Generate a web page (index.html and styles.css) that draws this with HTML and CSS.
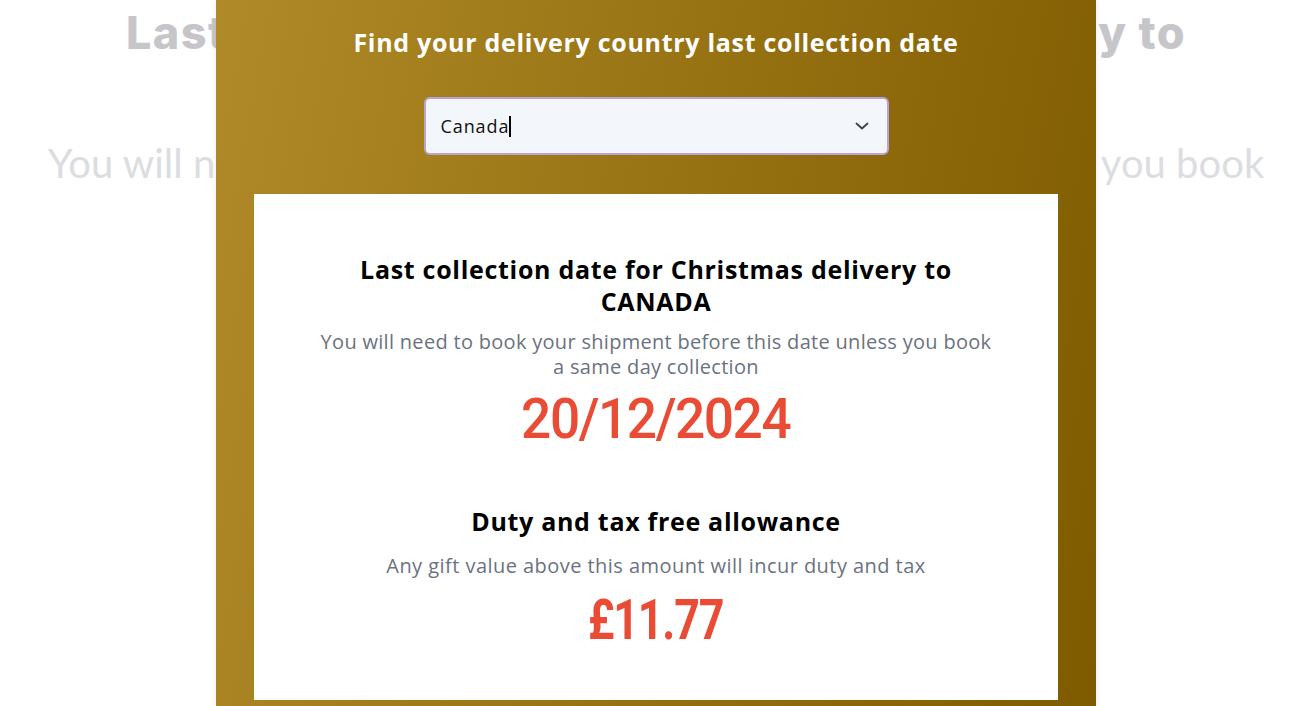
FILE: index.html
```html
<!DOCTYPE html>
<html lang="en">
<head>
<meta charset="utf-8">
<title>Christmas delivery dates</title>
<link rel="stylesheet" href="styles.css">
</head>
<body>
<div class="stage">
  <div class="backdrop">
    <h1 class="bg-title">Last collection date for Christmas delivery to</h1>
    <p class="bg-sub">You will need to book your shipment before this date unless you book</p>
  </div>

  <section class="panel">
    <h2 class="panel-title">Find your delivery country last collection date</h2>
    <div class="select">
      <span class="select-value">Canada<span class="caret"></span></span>
      <svg class="chevron" width="14" height="8" viewBox="0 0 14 8" aria-hidden="true">
        <path d="M1.5 1.5 L7 6.5 L12.5 1.5" fill="none" stroke="#374151" stroke-width="1.8" stroke-linecap="round" stroke-linejoin="round"/>
      </svg>
    </div>

    <div class="card">
      <div class="block">
        <h3 class="block-title">Last collection date for Christmas delivery to CANADA</h3>
        <p class="block-sub">You will need to book your shipment before this date unless you book a same day collection</p>
        <p class="figure"><span class="date">20/12/2024</span></p>
      </div>
      <div class="block block-second">
        <h3 class="block-title">Duty and tax free allowance</h3>
        <p class="block-sub block-sub-second">Any gift value above this amount will incur duty and tax</p>
        <p class="figure figure-second"><span class="amount">£11.77</span></p>
      </div>
    </div>
  </section>
</div>
</body>
</html>
```

FILE: styles.css
```css
* { box-sizing: border-box; }

html, body {
  margin: 0;
  padding: 0;
  background: #ffffff;
}

body {
  width: 1300px;
  height: 706px;
  overflow: hidden;
  font-family: "Open Sans", "Inter", "Liberation Sans", sans-serif;
}

.stage {
  position: relative;
  width: 1300px;
  height: 706px;
}

.backdrop {
  padding-left: 12px;
  text-align: center;
  white-space: nowrap;
}

.bg-title {
  margin: 0;
  padding-top: 8px;
  font-family: "Inter", "Liberation Sans", sans-serif;
  font-size: 45px;
  line-height: 50px;
  font-weight: 800;
  color: #c6c6ca;
  letter-spacing: 1.4px;
}

.bg-sub {
  margin: 0;
  padding-top: 80px;
  font-family: "Lato", "Liberation Sans", sans-serif;
  font-size: 40px;
  line-height: 50px;
  font-weight: 400;
  color: #dcdde1;
}

.panel {
  position: absolute;
  top: 0;
  left: 216px;
  width: 880px;
  height: 706px;
  padding: 26px 38px 0;
  background: linear-gradient(100deg, #b08a28 0%, #9a7515 45%, #7f5b00 100%);
  box-shadow: 0 0 6px rgba(0, 0, 0, 0.08);
  display: flex;
  flex-direction: column;
  align-items: center;
}

.panel-title {
  margin: 0;
  font-size: 25px;
  line-height: 32px;
  font-weight: 700;
  color: #ffffff;
  letter-spacing: 0.7px;
  white-space: nowrap;
}

.select {
  margin-top: 39px;
  width: 465px;
  height: 58px;
  border: 2px solid #b9a2d8;
  border-radius: 6px;
  background: #f3f6fa;
  display: flex;
  align-items: center;
  justify-content: space-between;
  padding: 0 18px 0 15px;
}

.select-value {
  font-size: 18px;
  color: #111111;
  display: flex;
  align-items: center;
  letter-spacing: 0.9px;
}

.caret {
  display: inline-block;
  width: 1.5px;
  height: 21px;
  background: #000000;
  margin-left: 0;
}

.card {
  margin-top: 39px;
  width: 804px;
  height: 506px;
  background: #ffffff;
  display: flex;
  flex-direction: column;
  align-items: center;
  padding-top: 59px;
  text-align: center;
}

.block {
  width: 700px;
  display: flex;
  flex-direction: column;
  align-items: center;
}

.block-second {
  margin-top: 56px;
}

.block-title {
  margin: 0;
  font-size: 25px;
  line-height: 32px;
  font-weight: 700;
  color: #000000;
  max-width: 640px;
  letter-spacing: 0.7px;
}

.block-sub {
  margin: 12px 0 0;
  max-width: 682px;
  font-size: 20px;
  line-height: 25px;
  font-weight: 400;
  color: #6b7280;
  letter-spacing: 0.3px;
}

.block-sub-second {
  margin-top: 16px;
  letter-spacing: 0.45px;
}

.figure {
  margin: 10px 0 0;
  height: 60px;
  display: flex;
  justify-content: center;
  align-items: center;
}

.figure-second {
  margin-top: 12px;
}

.date {
  display: inline-block;
  font-family: "Roboto", "Liberation Sans", sans-serif;
  font-size: 56px;
  line-height: 60px;
  font-weight: 500;
  color: #ea4b34;
  letter-spacing: -1.5px;
  transform: scaleX(0.95);
}

.amount {
  display: inline-block;
  font-family: "Roboto", "Liberation Sans", sans-serif;
  font-size: 56px;
  line-height: 60px;
  font-weight: 700;
  color: #ea4b34;
  letter-spacing: -1.5px;
  transform: scaleX(0.8);
}
```
